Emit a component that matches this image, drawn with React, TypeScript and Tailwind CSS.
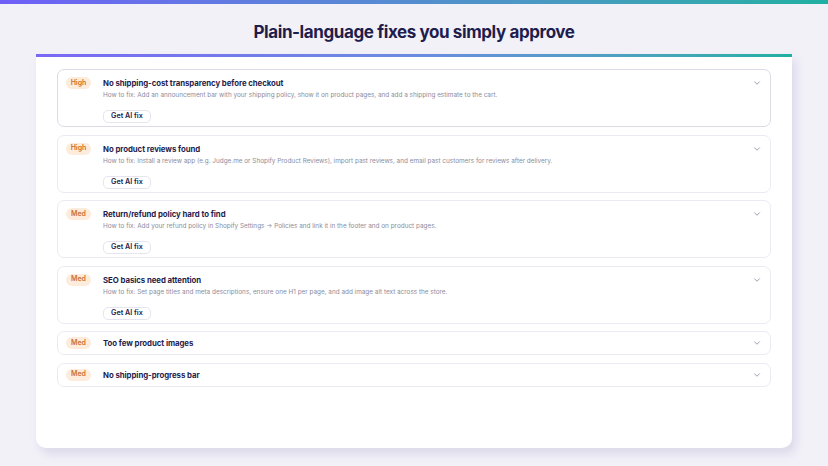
import { ChevronDown } from "lucide-react";

type Issue = {
  level: "High" | "Med";
  title: string;
  fix?: string;
};

const issues: Issue[] = [
  {
    level: "High",
    title: "No shipping-cost transparency before checkout",
    fix: "Add an announcement bar with your shipping policy, show it on product pages, and add a shipping estimate to the cart.",
  },
  {
    level: "High",
    title: "No product reviews found",
    fix: "Install a review app (e.g. Judge.me or Shopify Product Reviews), import past reviews, and email past customers for reviews after delivery.",
  },
  {
    level: "Med",
    title: "Return/refund policy hard to find",
    fix: "Add your refund policy in Shopify Settings → Policies and link it in the footer and on product pages.",
  },
  {
    level: "Med",
    title: "SEO basics need attention",
    fix: "Set page titles and meta descriptions, ensure one H1 per page, and add image alt text across the store.",
  },
  { level: "Med", title: "Too few product images" },
  { level: "Med", title: "No shipping-progress bar" },
];

const IssueRow: React.FC<{ issue: Issue; active?: boolean }> = ({ issue, active }) => {
  return (
    <div
      className={`rounded-[7px] border bg-white px-[8px] ${
        active ? "border-[#dcdbe8]" : "border-[#ecebf4]"
      } ${issue.fix ? "pt-[7px] pb-[3px]" : "py-[5px]"}`}
    >
      <div className="flex items-start">
        <span className="flex h-[12px] w-[25px] items-center justify-center rounded-full bg-[#fdecdc] text-[7px] font-semibold text-[#cf6f2a]">
          {issue.level}
        </span>
        <div className="ml-[12px] flex-1">
          <p className="text-[7.8px] font-bold leading-[12px] tracking-[-0.05px] text-[#1f1d4d]">
            {issue.title}
          </p>
          {issue.fix && (
            <>
              <p className="mt-[1px] text-[6.4px] leading-[10px] text-[#8d8c9c]">
                How to fix: {issue.fix}
              </p>
              <button className="mt-[10px] flex h-[13px] items-center rounded-[5px] border border-[#e6e5ef] bg-white px-[7px] text-[7.2px] font-semibold text-[#1f1d4d]">
                Get AI fix
              </button>
            </>
          )}
        </div>
        <ChevronDown className="mt-[1px] h-[10px] w-[10px] text-[#8b8aa3]" strokeWidth={2} />
      </div>
    </div>
  );
};

export default function App() {
  return (
    <div
      className="min-h-[466px] bg-[#f2f1f8] text-[#1f1d4d]"
      style={{ fontFamily: "Inter, 'Noto Sans', sans-serif" }}
    >
      <div className="h-[4px] bg-gradient-to-r from-[#6f5ef7] to-[#1fb0a2]" />
      <h1 className="mt-[16px] text-center text-[17px] font-bold leading-[24px] tracking-[-0.4px] text-[#1f1d4d]">
        Plain-language fixes you simply approve
      </h1>
      <div className="mx-[36px] mt-[10px] h-[394px] rounded-b-[10px] bg-white shadow-[4px_6px_10px_rgba(120,110,170,0.18)]">
        <div className="h-[3px] bg-gradient-to-r from-[#7a68f5] via-[#6a8be0] to-[#20b0a2]" />
        <div className="flex flex-col gap-[7.5px] px-[21px] pt-[12px]">
          {issues.map((issue, i) => (
            <IssueRow key={issue.title} issue={issue} active={i === 0} />
          ))}
        </div>
      </div>
    </div>
  );
}
